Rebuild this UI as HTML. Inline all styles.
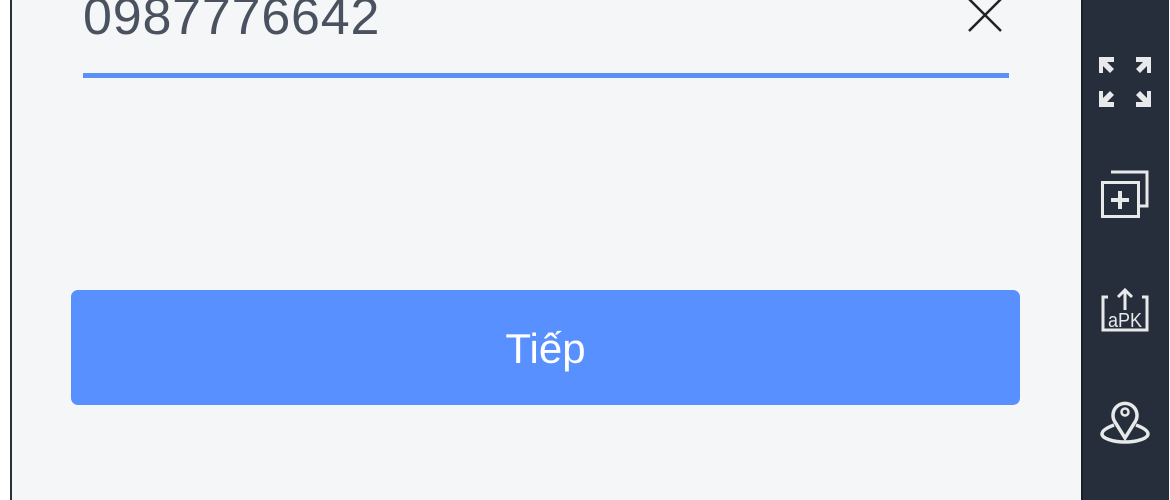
<!DOCTYPE html>
<html><head><meta charset="utf-8"><style>
html,body{margin:0;padding:0;width:1170px;height:500px;overflow:hidden;background:#fff;font-family:"Liberation Sans",sans-serif}
.main{position:absolute;left:10px;top:0;width:1071px;height:500px;background:#f5f6f8;border-left:2px solid #2a2f38}
.num{position:absolute;left:83px;top:-9px;font-size:52px;color:#4a5260;letter-spacing:0.8px;line-height:52px}
.ul{position:absolute;left:83px;top:73px;width:926px;height:5px;background:#5b91f5}
.btn{position:absolute;left:71px;top:290px;width:949px;height:115px;background:#5891ff;border-radius:7px;color:#fff;font-size:42px;text-align:center;line-height:118px}
.side{position:absolute;left:1081px;top:0;width:86px;height:500px;background:#272e3b;border-left:2px solid #1a1f27}
svg{position:absolute}
</style></head><body>
<div class="main"></div>
<div class="num">0987776642</div>
<svg style="left:960px;top:-10px" width="50" height="50"><path d="M9 9L41 41M41 9L9 41" stroke="#222" stroke-width="2.5"/></svg>
<div class="ul"></div>
<div class="btn">Tiếp</div>
<div class="side"></div>
<svg style="left:1081px;top:0" width="89" height="500" fill="none" stroke="#e8e9eb" stroke-width="4">
<g fill="#e8e9eb" stroke="none">
<path d="M18 57h15v5h-7l7 7-4 4-7-7v7h-4z"/>
<path d="M70 57h-15v5h7l-7 7 4 4 7-7v7h4z"/>
<path d="M18 107h15v-5h-7l7-7-4-4-7 7v-7h-4z"/>
<path d="M70 107h-15v-5h7l-7-7 4-4 7 7v-7h4z"/>
</g>
<path d="M30 172h36v34h-8" stroke-width="3"/>
<rect x="21.5" y="182.5" width="36" height="34" stroke-width="3"/>
<path d="M39 191v18M30 200h18" stroke-width="4"/>
<path d="M27 297h-5v33h44v-33h-5" stroke-width="3"/>
<path d="M44 310v-20M37 297l7-7 7 7" stroke-width="3"/>
<text x="44" y="327" font-size="20" fill="#e8e9eb" stroke="none" text-anchor="middle" font-family="Liberation Sans" textLength="34" lengthAdjust="spacingAndGlyphs">aPK</text>
<path d="M44 438l-10-16a12 12 0 1 1 20 0z" stroke-width="3.5"/>
<circle cx="44" cy="412" r="3.5" stroke-width="2.5"/>
<path d="M33 425c-8 3-12 6-12 9 0 4 10 8 23 8s23-4 23-8c0-3-4-6-12-9" stroke-width="3.5"/>
</svg>
</body></html>
